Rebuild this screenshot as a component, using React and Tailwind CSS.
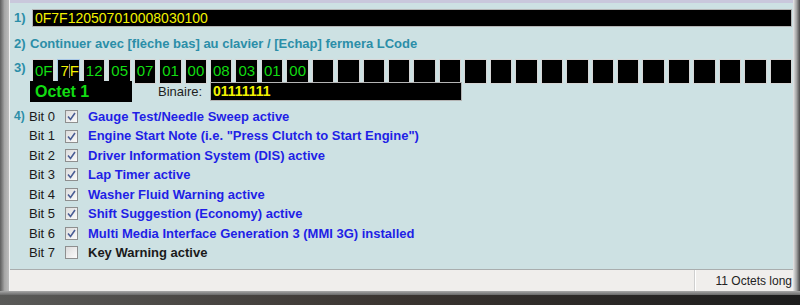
import React from 'react'

const bytes = ['0F', '7F', '12', '05', '07', '01', '00', '08', '03', '01', '00']
const boxes = Array.from({ length: 30 }, (_, i) => bytes[i] ?? '')

const bits = [
  { n: 0, on: true, label: 'Gauge Test/Needle Sweep active' },
  { n: 1, on: true, label: 'Engine Start Note (i.e. "Press Clutch to Start Engine")' },
  { n: 2, on: true, label: 'Driver Information System (DIS) active' },
  { n: 3, on: true, label: 'Lap Timer active' },
  { n: 4, on: true, label: 'Washer Fluid Warning active' },
  { n: 5, on: true, label: 'Shift Suggestion (Economy) active' },
  { n: 6, on: true, label: 'Multi Media Interface Generation 3 (MMI 3G) installed' },
  { n: 7, on: false, label: 'Key Warning active' },
]

const Check = ({ on }) => (
  <span className="w-[13px] h-[13px] border border-[#8e8f8f] bg-gradient-to-br from-[#dcdcdc] to-[#fbfbfb] flex items-center justify-center">
    {on && (
      <svg width="9" height="9" viewBox="0 0 9 9">
        <path d="M1 4.5 L3.5 7.5 L8 1" fill="none" stroke="#4a5d94" strokeWidth="1.6" />
      </svg>
    )}
  </span>
)

const App = () => {
  return (
    <div className="w-[800px] h-[305px] bg-[#2e2e2c] overflow-hidden font-['Liberation_Sans',Arial,sans-serif]">
      <div className="h-[291px] flex">
        <div className="w-[10px] h-full bg-gradient-to-r from-[#5e5e5e] via-[#a6a6a6] to-[#bdbdbd] border-r border-[#f4f4f4]" />
        <div className="flex-1 flex flex-col border-t-[3px] border-[#c9c8dc]">
          <div className="flex-1 bg-[#cde1e3] flex flex-col relative">
            {/* 1) */}
            <div className="mt-[6px] h-[18px] flex items-center">
              <span className="w-[22px] pl-[4px] text-[13px] font-bold text-[#2b8ea8]">1)</span>
              <div className="flex-1 mr-[1px] h-full bg-black border border-[#b4b4b4] flex items-center pl-[2px] text-[14px] text-[#f2f200]">
                0F7F120507010008030100
              </div>
            </div>
            {/* 2) */}
            <div className="mt-[9px] h-[16px] flex items-center text-[13px] font-bold text-[#2b8ea8]">
              <span className="w-[20px] pl-[4px]">2)</span>
              <span>Continuer avec [flèche bas] au clavier / [Echap] fermera LCode</span>
            </div>
            {/* 3) */}
            <div className="mt-[7px] h-[18px] flex items-center">
              <span className="w-[22px] pl-[4px] text-[13px] font-bold text-[#2b8ea8]">3)</span>
              <div className="w-[760px] h-full grid grid-cols-[repeat(30,minmax(0,1fr))] gap-x-[3px]">
                {boxes.map((b, i) =>
                  i === 1 ? (
                    <div key={i} className="bg-black border border-[#a7c6e6] flex items-center pl-[2px] text-[15px] text-[#f2f200]">
                      7<span className="w-px h-[14px] bg-[#8a8a8a]" />F
                    </div>
                  ) : (
                    <div key={i} className="bg-black border border-[#d6d6d6] flex items-center pl-[2px] text-[15px] text-[#12dc12]">
                      {b}
                    </div>
                  )
                )}
              </div>
            </div>
            {/* octet */}
            <div className="mt-[4px] h-[21px] flex items-center">
              <div className="ml-[20px] w-[102px] h-full bg-black flex items-center pl-[5px] text-[16px] font-bold text-[#12dc12]">
                Octet 1
              </div>
              <span className="ml-[26px] w-[52px] text-[13px] text-[#1e1e1e]">Binaire:</span>
              <div className="w-[252px] h-[19px] bg-black border border-[#b4b4b4] flex items-center pl-[2px] text-[14px] font-bold text-[#f2f200]">
                01111111
              </div>
            </div>
            {/* 4) */}
            <div className="mt-[5px] flex flex-col">
              {bits.map((b) => (
                <div key={b.n} className="h-[19.43px] flex items-center">
                  <span className="w-[19px] pl-[4px] text-[12px] font-bold text-[#2b8ea8] -translate-y-[1px]">
                    {b.n === 0 ? '4)' : ''}
                  </span>
                  <span className="w-[36px] text-[13px] text-[#1a1a1a]">Bit {b.n}</span>
                  <Check on={b.on} />
                  <span className={`ml-[10px] text-[13px] font-bold ${b.on ? 'text-[#1f1fe6]' : 'text-[#1a1a1a]'}`}>
                    {b.label}
                  </span>
                </div>
              ))}
            </div>
          </div>
          {/* status bar */}
          <div className="h-[22px] bg-[#f0eeec] border-t border-[#a9adae] flex">
            <div className="flex-1 border-r border-[#cfcfcf]" />
            <div className="w-[98px] border-l border-white flex items-center justify-end pr-[1px] text-[12px] text-[#222]">
              11 Octets long
            </div>
          </div>
        </div>
        <div className="w-[7px] h-full bg-gradient-to-r from-[#e8e8e8] via-[#a4a4a4] to-[#4a4a4a]" />
      </div>
      <div className="h-[4px] bg-gradient-to-b from-[#a8a8a8] to-[#6a6a6a]" />
      <div className="h-[10px] bg-gradient-to-r from-[#5a5a58] via-[#3a3430] to-[#1c1c1c]" />
    </div>
  )
}

export default App
